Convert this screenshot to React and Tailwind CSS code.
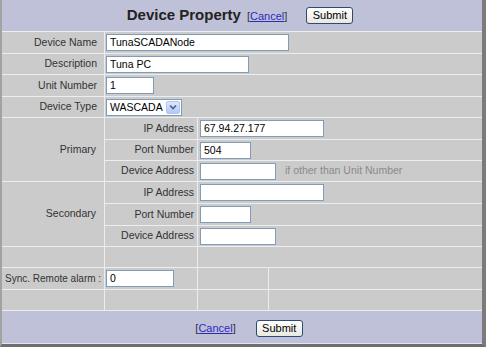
import React from 'react';

const line = 'border-t border-[#ededed]';
const cellL = 'border-l border-[#ededed]';

function TextBox({ w, value = '' }) {
  return (
    <div
      className={`h-[17px] ${w} bg-white border border-[#7f9db9] text-[10.5px] leading-[15px] pl-[3px] text-black whitespace-nowrap overflow-hidden`}
    >
      {value}
    </div>
  );
}

function SubmitButton() {
  return (
    <div className="inline-flex items-center justify-center w-[47px] h-[17px] rounded-[3px] border border-[#2f4a72] bg-gradient-to-b from-white to-[#e9e8e2] text-[11px] text-black leading-none">
      Submit
    </div>
  );
}

function CancelLink() {
  return (
    <span className="text-[11px] text-[#333]">
      [<span className="text-[#2b2bbb] underline">Cancel</span>]
    </span>
  );
}

function Row({ h, label, children }) {
  return (
    <tr>
      <td className={`${h} ${line} text-right pr-[7px] align-middle`}>{label}</td>
      <td colSpan={3} className={`${h} ${line} ${cellL} pl-[1px] align-middle`}>
        {children}
      </td>
    </tr>
  );
}

function SubRow({ h, first, group, label, children }) {
  return (
    <tr>
      {first && (
        <td rowSpan={3} className={`${line} text-right pr-[8px] align-middle`}>
          {group}
        </td>
      )}
      <td className={`${h} ${line} ${cellL} text-right pr-[3px] align-middle`}>{label}</td>
      <td colSpan={2} className={`${h} ${line} ${cellL} pl-[2px] align-middle`}>
        {children}
      </td>
    </tr>
  );
}

export default function App() {
  return (
    <div
      className="w-[486px] h-[347px] bg-[#cbcbcb] border-l-2 border-l-[#a2a2a2] border-r-4 border-r-[#7b7b7b] border-b-[3px] border-b-[#6e6e6e] overflow-hidden text-[10.5px] text-[#333]"
      style={{ fontFamily: '"Liberation Sans", Arial, sans-serif' }}
    >
      <table className="w-[480px] table-fixed border-separate border-spacing-0">
        <colgroup>
          <col className="w-[102px]" />
          <col className="w-[93px]" />
          <col className="w-[71px]" />
          <col className="w-[214px]" />
        </colgroup>
        <tbody>
          <tr>
            <td colSpan={4} className="h-[31px] bg-[#bfc1d8] align-middle">
              <div className="flex items-center justify-center pr-[4px]">
                <span className="text-[15px] font-bold text-[#222]">Device Property</span>
                <span className="ml-[6px] mt-[2px]">
                  <CancelLink />
                </span>
                <span className="ml-[19px]">
                  <SubmitButton />
                </span>
              </div>
            </td>
          </tr>
          <Row h="h-[22px]" label="Device Name">
            <TextBox w="w-[183px]" value="TunaSCADANode" />
          </Row>
          <Row h="h-[21px]" label="Description">
            <TextBox w="w-[143px]" value="Tuna PC" />
          </Row>
          <Row h="h-[22px]" label="Unit Number">
            <TextBox w="w-[48px]" value="1" />
          </Row>
          <Row h="h-[21px]" label="Device Type">
            <div className="flex items-center h-[17px] w-[76px] bg-white border border-[#7f9db9] text-[10.5px] text-black">
              <span className="flex-1 pl-[3px] leading-none">WASCADA</span>
              <span className="w-[14px] h-[13px] mr-[1px] rounded-[2px] bg-gradient-to-b from-[#dce6fd] to-[#b3c8f6] border border-[#b4c6ef] flex items-center justify-center">
                <svg width="8" height="6" viewBox="0 0 8 6">
                  <path d="M1 1.5 L4 4.5 L7 1.5" fill="none" stroke="#4d6185" strokeWidth="1.6" />
                </svg>
              </span>
            </div>
          </Row>
          <SubRow h="h-[22px]" first group="Primary" label="IP Address">
            <TextBox w="w-[124px]" value="67.94.27.177" />
          </SubRow>
          <SubRow h="h-[21px]" label="Port Number">
            <TextBox w="w-[51px]" value="504" />
          </SubRow>
          <SubRow h="h-[21px]" label="Device Address">
            <div className="flex items-center">
              <TextBox w="w-[76px]" />
              <span className="ml-[9px] text-[10.5px] text-[#8a8a8a]">if other than Unit Number</span>
            </div>
          </SubRow>
          <SubRow h="h-[22px]" first group="Secondary" label="IP Address">
            <TextBox w="w-[124px]" />
          </SubRow>
          <SubRow h="h-[22px]" label="Port Number">
            <TextBox w="w-[51px]" />
          </SubRow>
          <SubRow h="h-[21px]" label="Device Address">
            <TextBox w="w-[76px]" />
          </SubRow>
          <tr>
            <td className={`h-[21px] ${line}`}></td>
            <td className={`h-[21px] ${line} ${cellL}`}></td>
            <td colSpan={2} className={`h-[21px] ${line} ${cellL}`}></td>
          </tr>
          <tr>
            <td className={`h-[22px] ${line} pl-[3px] whitespace-nowrap text-[10px] align-middle`}>Sync. Remote alarm :</td>
            <td className={`h-[22px] ${line} ${cellL} pl-[1px] align-middle`}>
              <TextBox w="w-[68px]" value="0" />
            </td>
            <td className={`h-[22px] ${line} ${cellL}`}></td>
            <td className={`h-[22px] ${line} ${cellL}`}></td>
          </tr>
          <tr>
            <td className={`h-[21px] ${line}`}></td>
            <td className={`h-[21px] ${line} ${cellL}`}></td>
            <td className={`h-[21px] ${line} ${cellL}`}></td>
            <td className={`h-[21px] ${line} ${cellL}`}></td>
          </tr>
          <tr>
            <td colSpan={4} className={`h-[34px] ${line} border-b border-b-[#e4e4ee] bg-[#bfc1d8] align-middle`}>
              <div className="flex items-center justify-center pl-[14px] pt-[2px]">
                <CancelLink />
                <span className="ml-[20px]">
                  <SubmitButton />
                </span>
              </div>
            </td>
          </tr>
        </tbody>
      </table>
    </div>
  );
}
